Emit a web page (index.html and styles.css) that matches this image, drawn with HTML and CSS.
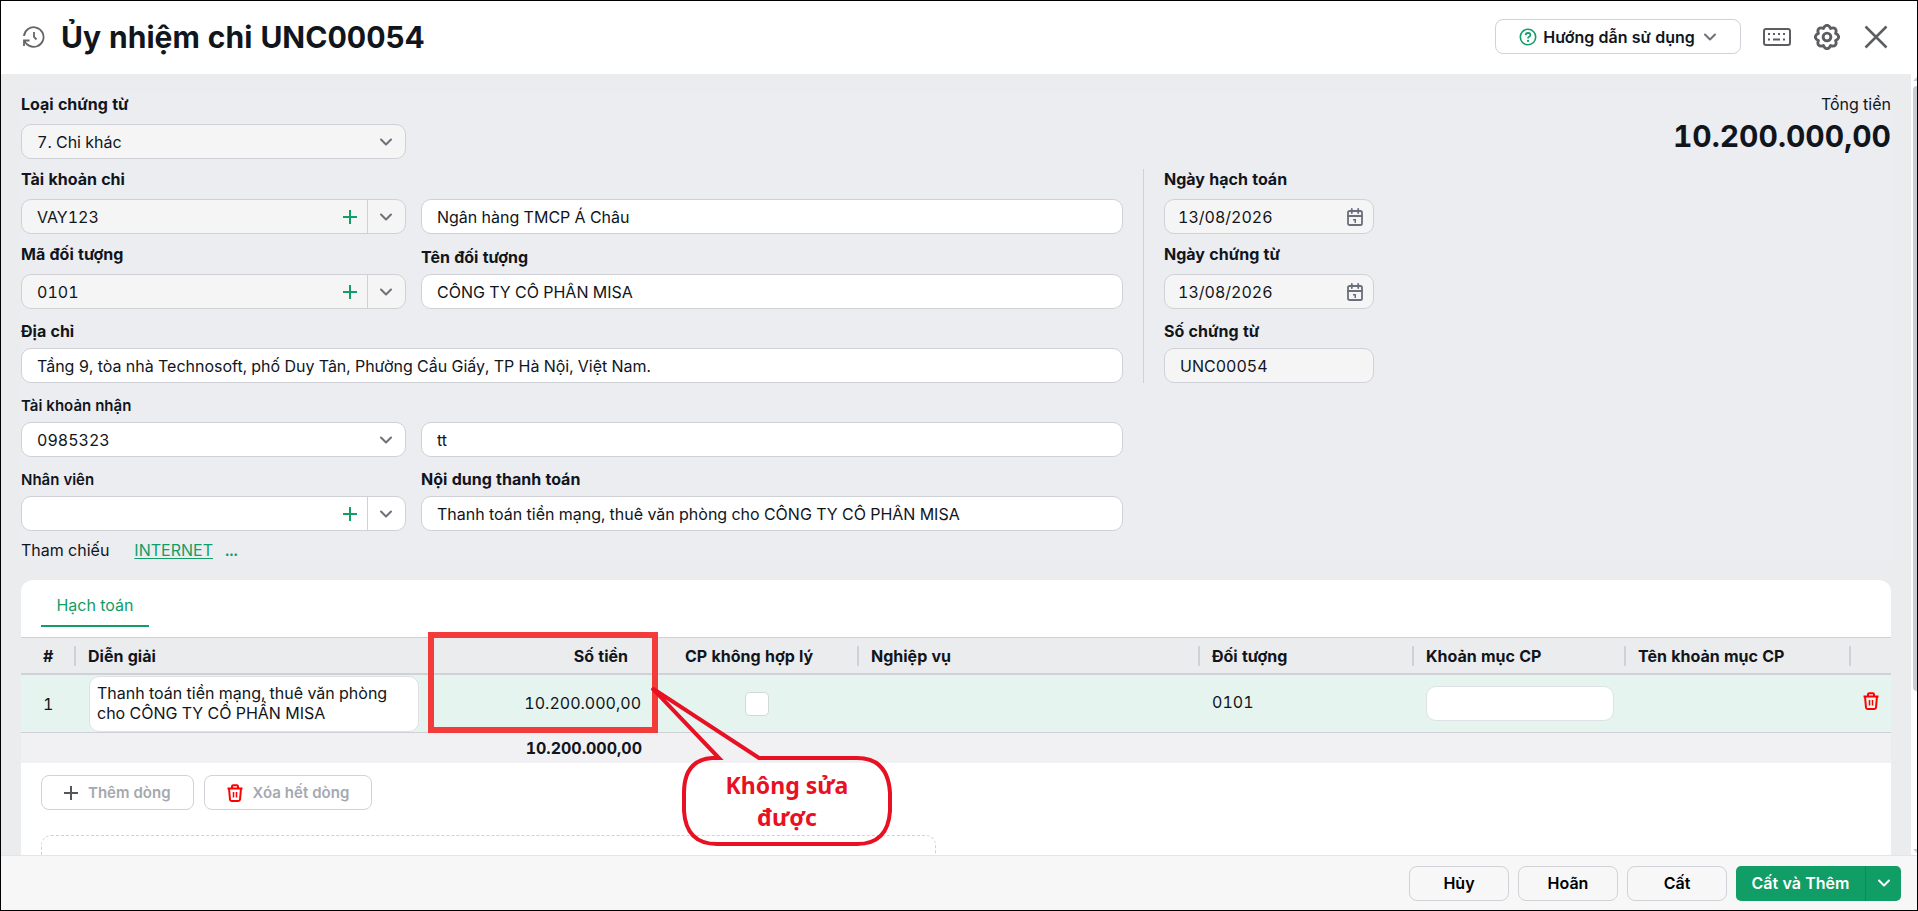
FILE: index.html
```html
<!DOCTYPE html>
<html lang="vi">
<head>
<meta charset="utf-8">
<meta name="viewport" content="width=device-width, initial-scale=1">
<title>Ủy nhiệm chi UNC00054</title>
<link rel="stylesheet" href="styles.css">
</head>
<body>
<svg class="sprite" aria-hidden="true">
  <symbol id="chevron" viewBox="0 0 14 14"><path d="M2 4.5 7 9.5 12 4.5" fill="none" stroke="currentColor" stroke-width="2" stroke-linecap="round" stroke-linejoin="round"/></symbol>
  <symbol id="plus" viewBox="0 0 14 14"><path d="M7 0V14M0 7H14" fill="none" stroke="currentColor" stroke-width="2"/></symbol>
  <symbol id="calendar" viewBox="0 0 16 18"><g fill="none" stroke="currentColor" stroke-width="1.8" stroke-linecap="round" stroke-linejoin="round"><rect x="1" y="3" width="14" height="14" rx="1.6"/><path d="M1 8H15M4.8 1V5M11.2 1V5"/></g><path d="M6 11h3v4H7.500v-2.400H6z" fill="currentColor"/></symbol>
  <symbol id="trash" viewBox="0 0 16 18"><g fill="none" stroke="currentColor" stroke-width="2" stroke-linejoin="round"><path d="M0.5 4.5H15.500M5 4.500V2.500Q5 1.300 6.200 1.300H9.800Q11 1.300 11 2.500V4.500M2 4.500 3 15.500Q3.100 17 4.600 17H11.400Q12.900 17 13 15.500L14 4.500"/><path d="M6.500 8V13.500M9.500 8V13.500" stroke-width="1.500"/></g></symbol>
</svg>

<header class="topbar">
  <svg class="history" viewBox="0 0 22 22" aria-hidden="true"><g fill="none" stroke="currentColor" stroke-width="1.8"><path d="M1 10A9.800 9.800 0 1 1 6 19.600"/><path d="M11 6V11L13.500 13.500"/><path d="M1 20V14.500H6.500M1.500 15Q3 18.500 6.500 19.800"/></g></svg>
  <h1 class="title">Ủy nhiệm chi UNC00054</h1>
  <div class="tools">
    <button class="btn guide" type="button">
      <svg class="help" viewBox="0 0 18 18" aria-hidden="true"><circle cx="9" cy="9" r="7.700" fill="none" stroke="currentColor" stroke-width="1.600"/><path d="M6.600 7.200Q6.800 4.900 9.100 4.900 11.400 5 11.400 6.900 11.400 8.100 10.100 8.700 9 9.200 9 10.600" fill="none" stroke="currentColor" stroke-width="1.700"/><circle cx="9" cy="12.900" r="1.100" fill="currentColor"/></svg>
      <span>Hướng dẫn sử dụng</span>
      <svg class="chev" aria-hidden="true"><use href="#chevron"/></svg>
    </button>
    <button class="icon-btn" type="button" aria-label="Phím tắt"><svg class="keyboard" viewBox="0 0 28 18"><rect x="1" y="1" width="26" height="16" rx="2" fill="none" stroke="currentColor" stroke-width="2"/><path d="M5 6h2M10 6h2M15 6h2M20 6h2M5 11.500h2M10 11.500h7M20 11.500h2" stroke="currentColor" stroke-width="1.800"/></svg></button>
    <button class="icon-btn" type="button" aria-label="Thiết lập"><svg class="gear" viewBox="0 0 26 26"><g fill="none" stroke="currentColor" stroke-width="2.900" stroke-linejoin="round"><circle cx="13" cy="13" r="3.900"/><path d="M21.600 9.440C25.700 11.300 25.700 14.700 21.600 16.560C23.200 20.800 20.800 23.200 16.560 21.600C14.700 25.700 11.300 25.700 9.440 21.600C5.200 23.200 2.800 20.800 4.400 16.560C0.300 14.700 0.300 11.300 4.400 9.440C2.800 5.200 5.200 2.800 9.440 4.400C11.300 0.300 14.700 0.300 16.560 4.400C20.800 2.800 23.200 5.200 21.600 9.440Z"/></g></svg></button>
    <button class="icon-btn" type="button" aria-label="Đóng"><svg class="close" viewBox="0 0 24 24"><path d="M1.500 1.500 22.500 22.500M22.500 1.500 1.500 22.500" stroke="currentColor" stroke-width="2.500"/></svg></button>
  </div>
</header>

<div class="viewport">
<main class="content">
  <section class="form">
    <div class="summary">
      <div class="field tall kind">
        <label for="kind">Loại chứng từ</label>
        <div class="box locked"><select id="kind"><option>7. Chi khác</option></select><svg class="chev over" aria-hidden="true"><use href="#chevron"/></svg></div>
      </div>
      <div class="total"><span class="total-label">Tổng tiền</span><strong class="total-value">10.200.000,00</strong></div>
    </div>

    <div class="columns">
      <div class="party">
        <div class="field tall">
          <label for="pay-acc">Tài khoản chi</label>
          <div class="box locked"><input id="pay-acc" value="VAY123"><button class="add" type="button" aria-label="Thêm"><svg><use href="#plus"/></svg></button><button class="drop" type="button" aria-label="Chọn"><svg class="chev"><use href="#chevron"/></svg></button></div>
        </div>
        <div class="field"><div class="box"><input aria-label="Tên ngân hàng" value="Ngân hàng TMCP Á Châu"></div></div>

        <div class="field tall">
          <label for="obj">Mã đối tượng</label>
          <div class="box locked"><input id="obj" value="0101"><button class="add" type="button" aria-label="Thêm"><svg><use href="#plus"/></svg></button><button class="drop" type="button" aria-label="Chọn"><svg class="chev"><use href="#chevron"/></svg></button></div>
        </div>
        <div class="field">
          <label for="obj-name">Tên đối tượng</label>
          <div class="box"><input id="obj-name" value="CÔNG TY CÔ PHÂN MISA"></div>
        </div>

        <div class="field wide">
          <label for="addr">Địa chỉ</label>
          <div class="box"><input id="addr" value="Tầng 9, tòa nhà Technosoft, phố Duy Tân, Phường Cầu Giấy, TP Hà Nội, Việt Nam."></div>
        </div>

        <div class="field minor">
          <label for="recv">Tài khoản nhận</label>
          <div class="box"><select id="recv"><option>0985323</option></select><svg class="chev over" aria-hidden="true"><use href="#chevron"/></svg></div>
        </div>
        <div class="field"><div class="box"><input aria-label="Ngân hàng nhận" value="tt"></div></div>

        <div class="field minor">
          <label for="staff">Nhân viên</label>
          <div class="box"><input id="staff" value=""><button class="add" type="button" aria-label="Thêm"><svg><use href="#plus"/></svg></button><button class="drop" type="button" aria-label="Chọn"><svg class="chev"><use href="#chevron"/></svg></button></div>
        </div>
        <div class="field">
          <label for="memo">Nội dung thanh toán</label>
          <div class="box"><input id="memo" value="Thanh toán tiền mạng, thuê văn phòng cho CÔNG TY CÔ PHÂN MISA"></div>
        </div>
      </div>

      <div class="dates">
        <div class="field tall">
          <label for="d1">Ngày hạch toán</label>
          <div class="box locked date"><input id="d1" value="13/08/2026"><svg class="cal over" aria-hidden="true"><use href="#calendar"/></svg></div>
        </div>
        <div class="field tall">
          <label for="d2">Ngày chứng từ</label>
          <div class="box locked date"><input id="d2" value="13/08/2026"><svg class="cal over" aria-hidden="true"><use href="#calendar"/></svg></div>
        </div>
        <div class="field">
          <label for="no">Số chứng từ</label>
          <div class="box locked"><input id="no" value="UNC00054"></div>
        </div>
      </div>
    </div>

    <div class="refs"><span>Tham chiếu</span><a href="#internet">INTERNET</a><a class="more" href="#more">...</a></div>
  </section>

  <section class="card">
    <nav class="tabs"><a class="tab" href="#hach-toan">Hạch toán</a></nav>
    <table class="grid">
      <colgroup><col class="c-no"><col class="c-desc"><col class="c-amt"><col class="c-cp"><col class="c-biz"><col class="c-obj"><col class="c-item"><col class="c-name"><col class="c-del"></colgroup>
      <thead>
        <tr><th class="num sep">#</th><th>Diễn giải</th><th class="amt">Số tiền</th><th class="sep cp">CP không hợp lý</th><th class="sep">Nghiệp vụ</th><th class="sep">Đối tượng</th><th class="sep">Khoản mục CP</th><th class="sep">Tên khoản mục CP</th><th></th></tr>
      </thead>
      <tbody>
        <tr>
          <td class="num">1</td>
          <td class="desc"><textarea aria-label="Diễn giải" rows="2">Thanh toán tiền mạng, thuê văn phòng cho CÔNG TY CỔ PHẦN MISA</textarea></td>
          <td class="amt">10.200.000,00
            <div class="highlight"></div>
            <div class="callout">
              <svg viewBox="0 0 242 160" aria-hidden="true"><path d="M1 1 68 71H61Q33 73 33 106V124Q35 157 66 157H206Q237 157 239 124V106Q237 71 206 71H108Z" fill="none" stroke="currentColor" stroke-width="4"/></svg>
              <p>Không sửa được</p>
            </div>
          </td>
          <td class="check"><input type="checkbox" aria-label="CP không hợp lý"></td>
          <td></td><td class="code">0101</td>
          <td class="item"><input aria-label="Khoản mục CP" value=""></td>
          <td></td>
          <td class="del"><button type="button" aria-label="Xóa dòng"><svg class="trash"><use href="#trash"/></svg></button></td>
        </tr>
      </tbody>
      <tfoot><tr><td></td><td></td><td class="amt">10.200.000,00</td><td colspan="6"></td></tr></tfoot>
    </table>
    <div class="row-actions">
      <button class="btn" type="button"><svg class="plus-dark" aria-hidden="true"><use href="#plus"/></svg><span>Thêm dòng</span></button>
      <button class="btn" type="button"><svg class="trash" aria-hidden="true"><use href="#trash"/></svg><span>Xóa hết dòng</span></button>
    </div>
    <div class="dropzone"></div>
  </section>
</main>
<div class="scroll" aria-hidden="true"><i class="up"></i><i class="thumb"></i><i class="down"></i></div>
</div>

<footer class="bottombar">
  <button class="btn act" type="button">Hủy</button>
  <button class="btn act" type="button">Hoãn</button>
  <button class="btn act" type="button">Cất</button>
  <div class="split"><button class="save" type="button">Cất và Thêm</button><button class="save-more" type="button" aria-label="Lựa chọn khác"><svg class="chev"><use href="#chevron"/></svg></button></div>
</footer>
</body>
</html>
```
FILE: styles.css
```css
* { box-sizing: border-box; }

body {
  margin: 0;
  height: 100vh;
  display: flex;
  flex-direction: column;
  border: 1px solid #000;
  overflow: hidden;
  background: #fff;
  color: #11151c;
  font: 16px/20px Inter, "Noto Sans", sans-serif;
  font-variant-numeric: tabular-nums;
}

button, input, select, textarea { font: inherit; font-variant-numeric: inherit; color: inherit; margin: 0; }
button { cursor: pointer; border: 0; background: none; padding: 0; }
svg { display: block; flex: none; }
.sprite { position: absolute; width: 0; height: 0; }

.chev { width: 14px; height: 14px; color: #6b7079; }

.btn {
  display: flex;
  align-items: center;
  justify-content: center;
  height: 35px;
  border: 1px solid #d0d2d8;
  border-radius: 8px;
  font-weight: 600;
}

/* Top bar */
.topbar {
  flex: none;
  display: flex;
  align-items: center;
  height: 73px;
  padding: 0 28px 2px 22px;
}
.history { width: 22px; height: 22px; color: #666; }
.title { margin: 0 0 0 16px; font-size: 30px; line-height: 40px; font-weight: 700; }
.tools { margin-left: auto; display: flex; align-items: center; }
.guide { width: 246px; gap: 6px; margin-right: 22px; }
.guide .chev { margin-left: 2px; }
.help { width: 18px; height: 18px; color: #119d66; }
.icon-btn { color: #5c5e61; }
.icon-btn + .icon-btn { margin-left: 23px; }
.keyboard { width: 28px; height: 18px; }
.gear { width: 26px; height: 26px; }
.close { width: 26px; height: 24px; }

/* Scrolling area */
.viewport { flex: 1; min-height: 0; display: flex; }
.content { flex: 1; min-width: 0; overflow: hidden; padding: 20px 20px 0; background: #ebecee; }
.scroll { flex: none; width: 6px; display: flex; flex-direction: column; align-items: flex-end; background: #fff; padding: 3px 0 2px; }
.thumb { width: 4px; height: 605px; margin: 5px 0 auto; background: #c9ccd2; border-radius: 4px 0 0 4px; }
.up, .down { width: 4px; height: 4px; background: #c9ccd2; }
.up { clip-path: polygon(0 100%, 100% 0, 100% 100%); }
.down { clip-path: polygon(0 0, 100% 0, 100% 100%); }

/* Form */
.form { background: #ecedf1; }
.summary { display: flex; justify-content: space-between; }
.kind { width: 385px; }
.total { display: flex; flex-direction: column; align-items: flex-end; }
.total-value { font-size: 30px; line-height: 40px; margin-top: 2px; }

.columns { display: grid; grid-template-columns: minmax(0, 1102fr) minmax(0, 251fr) minmax(0, 517fr); align-items: start; margin-top: 10px; }
.party { display: grid; grid-template-columns: minmax(0, 385fr) minmax(0, 702fr); gap: 10px 15px; align-items: end; }
.wide { grid-column: 1 / -1; }
.dates { display: flex; flex-direction: column; gap: 10px; margin-left: 20px; padding-left: 20px; border-left: 1px solid #cfd1d6; }

.field { display: flex; flex-direction: column; gap: 7px; padding-top: 2px; }
.field.tall { gap: 10px; padding-top: 0; }
.field label { font-weight: 700; }
.field.minor { gap: 6px; padding-top: 3px; }
.field.minor label { font-size: 15px; font-weight: 600; }

.box {
  position: relative;
  display: flex;
  height: 35px;
  border: 1px solid #cfd1d7;
  border-radius: 10px;
  background: #fff;
  overflow: hidden;
}
.box.locked { background: #f5f5f5; }
.box input, .box select {
  flex: 1;
  min-width: 0;
  border: 0;
  outline: 0;
  background: transparent;
  padding: 0 15px;
  appearance: none;
}
.box.date input { padding-left: 13px; }
.over { position: absolute; right: 12px; top: 50%; transform: translateY(-50%); pointer-events: none; }
.cal { width: 16px; height: 18px; right: 10px; color: #6b6f7c; }
.add { width: 34px; display: flex; align-items: center; justify-content: center; color: #119d66; }
.add svg { width: 14px; height: 14px; }
.drop { width: 38px; padding-right: 1px; display: flex; align-items: center; justify-content: center; border-left: 1px solid #cfd1d7; }

.refs { display: flex; padding: 9px 0 1px; }
.refs a { color: #119d66; margin-left: 25px; text-underline-offset: 2px; }
.refs .more { margin-left: 12px; font-weight: 600; text-decoration: none; }

/* Detail card */
.card { margin-top: 19px; background: #fff; border-radius: 12px 12px 0 0; }
.tabs { display: flex; padding: 0 20px; height: 57px; align-items: flex-start; }
.tab {
  width: 108px;
  height: 47px;
  padding-top: 15px;
  text-align: center;
  text-decoration: none;
  color: #119d66;
  border-bottom: 2px solid #119d66;
}

.grid { width: 100%; table-layout: fixed; border-collapse: separate; border-spacing: 0; }
.c-no { width: 55px; }
.c-desc { width: 350px; }
.c-amt { width: 237px; }
.c-cp { width: 196px; }
.c-biz { width: 341px; }
.c-obj { width: 214px; }
.c-item { width: 212px; }
.c-name { width: 225px; }
.c-del { width: 40px; }

.grid th {
  position: relative;
  height: 38px;
  padding: 0 12px;
  text-align: left;
  font-weight: 700;
  background: #ebecee;
  border-top: 1px solid #cfd1d7;
  border-bottom: 2px solid #cfd1d7;
}
.grid .sep::after { content: ""; position: absolute; right: 0; top: 8px; width: 2px; height: 20px; background: #cfd1d7; }
.grid th.cp { padding-left: 22px; }
.grid tbody td { position: relative; height: 58px; padding: 0 12px; background: #e5f4ef; border-bottom: 1px solid #cfd1d7; }
.grid tfoot td { height: 30px; padding: 0; font-weight: 700; background: #f1f1f4; }
.grid .num { padding: 0 22px; }
.grid th.amt { text-align: right; padding-right: 35px; }
.grid tbody .amt { text-align: right; padding: 0 22px 2px 0; }
.grid tfoot .amt { text-align: right; padding-right: 21px; }
.grid tbody .code { padding-bottom: 4px; }
.grid tbody .desc { padding: 0 7px 0 13px; }
.desc textarea {
  display: block;
  width: 100%;
  height: 56px;
  padding: 6px 7px;
  resize: none;
  border: 1px solid #dfe1e4;
  border-radius: 10px;
  background: #fff;
  overflow: hidden;
}
.grid tbody .check { text-align: center; padding: 0 8px 0 0; }
.check input { appearance: none; display: block; margin: 0 auto; width: 24px; height: 24px; border: 1px solid #d5d7dc; border-radius: 5px; background: #fff; }
.item input { display: block; width: 100%; height: 35px; border: 1px solid #dfe1e4; border-radius: 10px; background: #fff; }
.grid tbody .del { padding: 0 12px 2px; }
.trash { width: 16px; height: 18px; color: #f00; }

/* Annotation over the amount column */
.highlight { position: absolute; left: 2px; right: 5px; top: -43px; bottom: -1px; border: 6px solid #f43b3b; pointer-events: none; }
.callout { position: absolute; left: calc(100% - 12px); top: 12px; width: 242px; height: 160px; z-index: 1; color: #e81123; pointer-events: none; }
.callout svg { width: 242px; height: 160px; }
.callout p { position: absolute; left: 66px; right: 36px; top: 82px; margin: 0; text-align: center; font: 700 23px/32px "Noto Sans", sans-serif; }

.row-actions { display: flex; gap: 10px; padding: 12px 20px 25px; color: #a5a8b0; }
.row-actions .btn { color: inherit; font-size: 15px; padding: 0 22px; gap: 10px; }
.plus-dark { width: 14px; height: 14px; color: #55575a; }
.dropzone { margin-left: 20px; width: 895px; height: 80px; border: 1px dashed #cfd1d7; border-radius: 10px; }

/* Bottom bar */
.bottombar {
  flex: none;
  display: flex;
  align-items: center;
  justify-content: flex-end;
  gap: 9px;
  height: 55px;
  padding: 0 16px 0 0;
  background: #f7f7f7;
  border-top: 1px solid #e4e5e7;
  color: #000;
}
.act { width: 100px; }
.split { display: flex; height: 35px; border-radius: 5px; overflow: hidden; background: #119d66; color: #fff; font-weight: 600; }
.save { width: 129px; }
.save-more { width: 36px; display: flex; align-items: center; justify-content: center; border-left: 1px solid #0d8a58; }
.save-more .chev { color: #fff; }
```
